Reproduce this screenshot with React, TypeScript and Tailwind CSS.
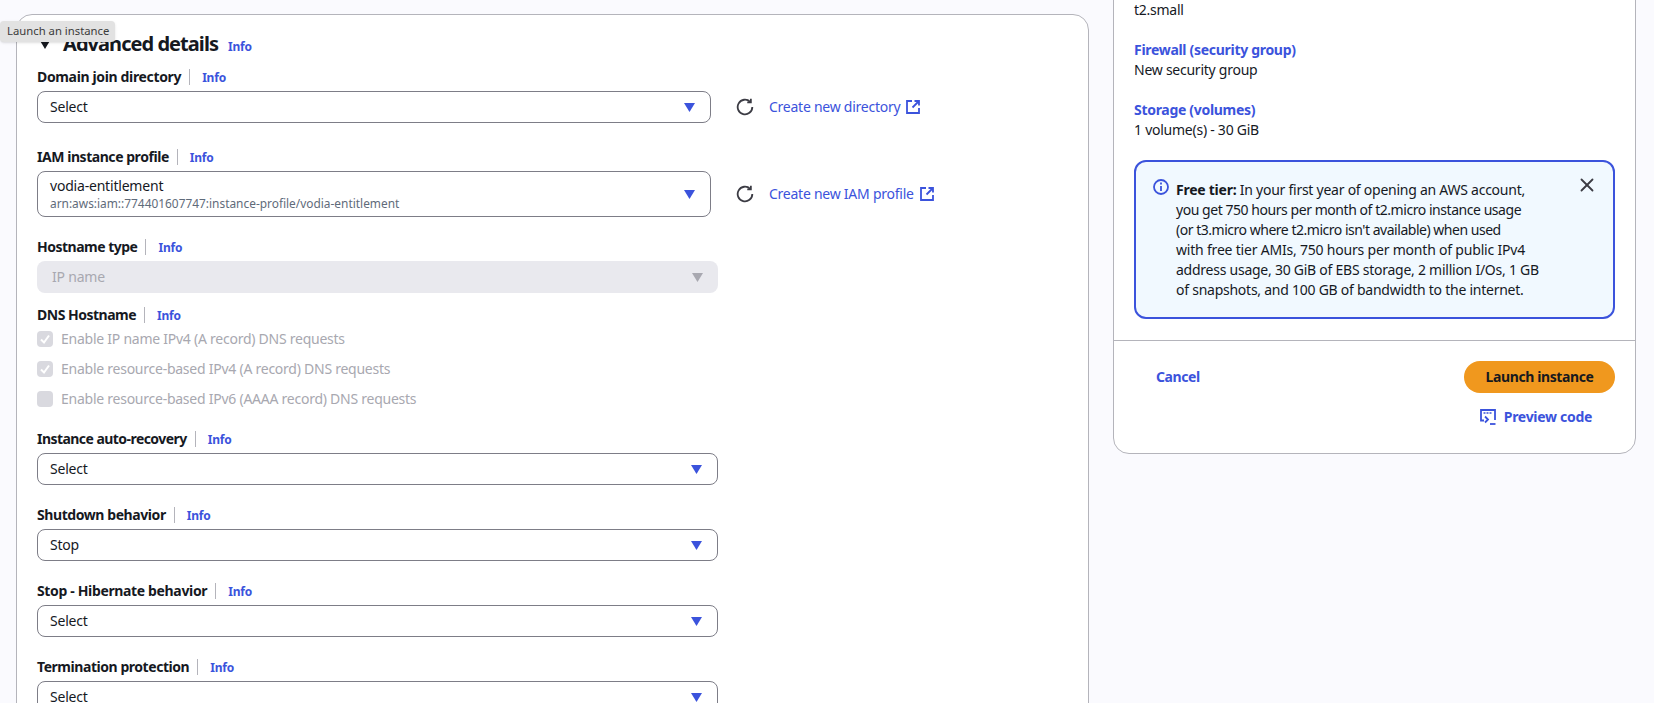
import { X } from "lucide-react";

const font = { fontFamily: '"Noto Sans", sans-serif' };

const ArrowDown = ({ disabled }: { disabled?: boolean }) => (
  <svg width="11" height="9" viewBox="0 0 10 8" className="shrink-0">
    <path d="M0 0h10L5 8z" fill={disabled ? "#a8a8b0" : "#3b53dc"} />
  </svg>
);

const RefreshIcon = () => (
  <svg width="18" height="18" viewBox="0 0 16 16" fill="none" stroke="#3c3c44" strokeWidth="1.6" className="shrink-0">
    <path d="M14.5 8a6.5 6.5 0 1 1-1.9-4.6" />
    <path d="M13.2 0.6v3.2h-3.2" />
  </svg>
);

const ExternalIcon = () => (
  <svg width="14" height="14" viewBox="0 0 14 14" fill="none" stroke="#3b53dc" strokeWidth="1.8" className="shrink-0">
    <path d="M6 1H1v12h12V8" />
    <path d="M8.5 1H13v4.5M13 1L6.5 7.5" />
  </svg>
);

const CodeIcon = () => (
  <svg width="16" height="16" viewBox="0 0 16 16" fill="none" stroke="#3b53dc" strokeWidth="1.8" className="shrink-0">
    <path d="M4 11.5H1V1h14v10" />
    <path d="M3.5 4h2M6.5 4h2M9.5 4h2" strokeWidth="1.4" />
    <path d="M5 7.5l3 3-3 3" />
    <path d="M10 15h5.5" />
  </svg>
);

const FieldLabel = ({ label, tracking = "tracking-[-0.4px]" }: { label: string; tracking?: string }) => (
  <div className="flex h-5 items-center text-sm font-bold text-[#16191f]">
    <span className={tracking}>{label}</span>
    <span className="ml-2 h-4 w-px bg-[#b4b4bb]" />
    <a className="ml-3 mt-[2px] text-xs font-bold tracking-[-0.2px] text-[#3b53dc]">Info</a>
  </div>
);

const SelectBox = ({ value, sub, wide = true }: { value: string; sub?: string; wide?: boolean }) => (
  <div
    className={`mt-1 flex items-center justify-between rounded-lg border border-[#7d7d87] bg-white pl-3 pr-[15px] ${
      wide ? "w-[681px]" : "w-[674px]"
    } ${sub ? "h-[46px]" : "h-8"}`}
  >
    <div>
      <div className="text-sm leading-[18px] text-[#16191f] tracking-[-0.2px]">{value}</div>
      {sub && <div className="text-[11.9px] leading-[17px] text-[#5f6b7a]">{sub}</div>}
    </div>
    <ArrowDown />
  </div>
);

const SideLink = ({ text }: { text: string }) => (
  <div className="mt-1 flex items-center">
    <span className="ml-[25px]">
      <RefreshIcon />
    </span>
    <a className="ml-[15px] text-sm text-[#3b53dc] tracking-[-0.25px]">{text}</a>
    <span className="ml-[6px]">
      <ExternalIcon />
    </span>
  </div>
);

const CheckRow = ({ label, checked }: { label: string; checked?: boolean }) => (
  <div className="flex h-5 items-center gap-2">
    <span className="flex h-4 w-4 items-center justify-center rounded bg-[#d9d9df]">
      {checked && (
        <svg width="12" height="12" viewBox="0 0 12 12" fill="none" stroke="#fff" strokeWidth="2">
          <path d="M2 6.5l3 3 5-7" />
        </svg>
      )}
    </span>
    <span className="text-sm text-[#a8a8b0] tracking-[-0.25px]">{label}</span>
  </div>
);

const alertLines = [
  { text: "you get 750 hours per month of t2.micro instance usage", cls: "tracking-[-0.45px]" },
  { text: "(or t3.micro where t2.micro isn't available) when used", cls: "tracking-[-0.48px]" },
  { text: "with free tier AMIs, 750 hours per month of public IPv4", cls: "tracking-[-0.2px]" },
  { text: "address usage, 30 GiB of EBS storage, 2 million I/Os, 1 GB", cls: "tracking-[-0.25px]" },
  { text: "of snapshots, and 100 GB of bandwidth to the internet.", cls: "tracking-[-0.25px]" },
];

const SummaryItem = ({ title, value }: { title: string; value: string }) => (
  <div className="mt-5">
    <div className="text-sm font-bold leading-5 text-[#3b53dc] tracking-[-0.3px]">{title}</div>
    <div className="text-sm leading-5 text-[#16191f] tracking-[-0.25px]">{value}</div>
  </div>
);

export default function App() {
  return (
    <div style={font} className="relative flex h-[703px] items-start gap-6 overflow-hidden bg-[#fafafe] pl-4 pt-[14px]">
      <div className="absolute left-0 top-[21px] z-10 flex h-[21px] w-[115px] items-center rounded-sm bg-[#e2e2e2] pl-[7px] text-[11.3px] text-[#3c3c3c] shadow-sm">
        Launch an instance
      </div>

      {/* left form */}
      <div className="h-[760px] w-[1073px] shrink-0 rounded-2xl border border-[#b4b4bb] bg-white pl-5 pt-[15px]">
        <div className="flex h-7 items-center">
          <svg width="12" height="10" viewBox="0 0 12 10" className="ml-[2px]">
            <path d="M0 0h12L6 10z" fill="#16191f" />
          </svg>
          <h2 className="ml-[12px] text-xl font-bold text-[#16191f] tracking-[-0.95px]">Advanced details</h2>
          <a className="ml-[10px] mt-[6px] text-xs font-bold tracking-[-0.2px] text-[#3b53dc]">Info</a>
        </div>

        <div className="mt-[9px]">
          <FieldLabel label="Domain join directory" tracking="tracking-[-0.35px]" />
          <div className="flex items-center">
            <SelectBox value="Select" wide={false} />
            <SideLink text="Create new directory" />
          </div>
        </div>

        <div className="mt-6">
          <FieldLabel label="IAM instance profile" tracking="tracking-[-0.45px]" />
          <div className="flex items-center">
            <SelectBox
              value="vodia-entitlement"
              sub="arn:aws:iam::774401607747:instance-profile/vodia-entitlement"
              wide={false}
            />
            <SideLink text="Create new IAM profile" />
          </div>
        </div>

        <div className="mt-5">
          <FieldLabel label="Hostname type" tracking="tracking-[-0.5px]" />
          <div className="mt-1 flex h-8 w-[681px] items-center justify-between rounded-lg bg-[#e9e9ee] pl-[15px] pr-[15px]">
            <span className="text-sm text-[#a8a8b0] tracking-[-0.2px]">IP name</span>
            <ArrowDown disabled />
          </div>
        </div>

        <div className="mt-3">
          <FieldLabel label="DNS Hostname" tracking="tracking-[-0.5px]" />
          <div className="mt-1 flex flex-col gap-[10px]">
            <CheckRow checked label="Enable IP name IPv4 (A record) DNS requests" />
            <CheckRow checked label="Enable resource-based IPv4 (A record) DNS requests" />
            <CheckRow label="Enable resource-based IPv6 (AAAA record) DNS requests" />
          </div>
        </div>

        <div className="mt-5">
          <FieldLabel label="Instance auto-recovery" tracking="tracking-[-0.55px]" />
          <SelectBox value="Select" />
        </div>
        <div className="mt-5">
          <FieldLabel label="Shutdown behavior" tracking="tracking-[-0.42px]" />
          <SelectBox value="Stop" />
        </div>
        <div className="mt-5">
          <FieldLabel label="Stop - Hibernate behavior" tracking="tracking-[-0.35px]" />
          <SelectBox value="Select" />
        </div>
        <div className="mt-5">
          <FieldLabel label="Termination protection" tracking="tracking-[-0.45px]" />
          <SelectBox value="Select" />
        </div>
      </div>

      {/* right summary, scrolled so its top is off the page */}
      <div className="-mt-[34px] w-[523px] shrink-0 rounded-2xl border border-[#b4b4bb] bg-white">
        <div className="px-5 pt-[19px]">
          <div className="text-sm leading-5 text-[#16191f] tracking-[-0.25px]">t2.small</div>
          <SummaryItem title="Firewall (security group)" value="New security group" />
          <SummaryItem title="Storage (volumes)" value="1 volume(s) - 30 GiB" />

          <div className="relative mt-5 h-[159px] w-[481px] rounded-xl border-2 border-[#3b53dc] bg-[#f1f9ff] pl-10 pt-[18px] text-sm leading-5 text-[#16191f] tracking-[-0.25px]">
            <svg width="16" height="16" viewBox="0 0 16 16" fill="none" stroke="#3b53dc" strokeWidth="1.8" className="absolute left-[17px] top-[17px]">
              <circle cx="8" cy="8" r="7" />
              <path d="M8 7v5M8 3.5v2" />
            </svg>
            <div>
              <b>Free tier:</b> In your first year of opening an AWS account,
            </div>
            {alertLines.map((line) => (
              <div key={line.text} className={line.cls}>
                {line.text}
              </div>
            ))}
            <X size={22} strokeWidth={2} className="absolute right-[15px] top-[12px] text-[#3c3c44]" />
          </div>
        </div>

        <div className="mt-[21px] border-t border-[#b4b4bb] px-5 pb-[26px] pt-5">
          <div className="flex items-center justify-between">
            <a className="ml-[22px] text-sm font-bold text-[#3b53dc] tracking-[-0.4px]">Cancel</a>
            <button className="h-8 w-[151px] rounded-full bg-[#f0981e] text-sm font-bold text-[#16191f] tracking-[-0.4px]">
              Launch instance
            </button>
          </div>
          <div className="mr-[23px] mt-[14px] flex h-5 items-center justify-end gap-2">
            <CodeIcon />
            <a className="text-sm font-bold text-[#3b53dc] tracking-[-0.3px]">Preview code</a>
          </div>
        </div>
      </div>
    </div>
  );
}
